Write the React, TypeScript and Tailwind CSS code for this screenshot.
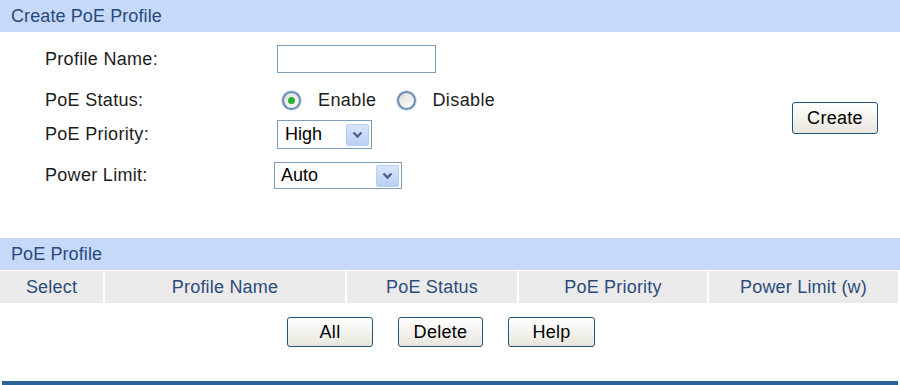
function Radio({ checked }: { checked?: boolean }) {
    return (
        <span className="
            flex items-center justify-center
            w-[19px] h-[19px]
            rounded-full border-2 border-[#6a8cb3]
            bg-gradient-to-br from-[#dcdcdc] to-white
            shadow-[0_0_0_1px_#d5e0ee]
        ">
            {checked && <span className="w-[7px] h-[7px] rounded-full bg-[#29b02f]" />}
        </span>
    );
}

function Select(props: { value: string, width: string, textPad: string }) {
    return (
        <div className={`flex items-center justify-between h-full border border-[#7f9db9] bg-white ${props.width}`}>
            <span className={`text-[18px] text-black ${props.textPad}`}>{props.value}</span>
            <span className="
                flex items-center justify-center
                w-[23px] h-[22px] mr-[2px]
                rounded-[2px] border border-[#b9cdf1]
                bg-gradient-to-b from-[#d9e5fb] to-[#b9cff5]
            ">
                <svg width="11" height="8" viewBox="0 0 11 8">
                    <path d="M1.5 1.5 L5.5 5.5 L9.5 1.5" stroke="#4d6288" strokeWidth="2.4" fill="none" />
                </svg>
            </span>
        </div>
    );
}

function Button(props: { label: string, width?: string }) {
    return (
        <button className={`
            h-[30px] ${props.width ?? 'w-[86px]'}
            rounded-[3px] border border-[#1f5583]
            bg-gradient-to-b from-white to-[#e8e6dc]
            text-[18px] text-black leading-none tracking-[0.3px]
        `}>
            {props.label}
        </button>
    );
}

const labelCls = "w-[232px] text-[18px] text-[#1c1c1c] tracking-[0.3px]";

const columns = [
    { name: 'Select', w: 'w-[103px]' },
    { name: 'Profile Name', w: 'w-[240px]' },
    { name: 'PoE Status', w: 'w-[170px]' },
    { name: 'PoE Priority', w: 'w-[188px]' },
    { name: 'Power Limit (w)', w: 'w-[189px]' },
];

export default function App() {
    return (
        <div className="w-[900px] h-[385px] bg-white flex flex-col font-['Liberation_Sans',Arial,sans-serif] overflow-hidden">
            <div className="h-[32px] flex items-center pl-[11px] bg-[#c6d9f9] text-[18px] text-[#284a7e] tracking-[0.1px]">
                Create PoE Profile
            </div>

            <div className="h-[206px] flex">
                <div className="flex flex-col pl-[45px]">
                    <div className="flex items-center mt-[13px] h-[28px]">
                        <span className={labelCls}>Profile Name:</span>
                        <div className="w-[159px] h-full border border-[#7f9db9] bg-white" />
                    </div>
                    <div className="flex items-center mt-[17px] h-[20px]">
                        <span className={labelCls}>PoE Status:</span>
                        <div className="flex items-center text-[18px] text-[#1c1c1c] tracking-[0.4px]">
                            <span className="ml-[5px]"><Radio checked /></span>
                            <span className="ml-[17px]">Enable</span>
                            <span className="ml-[21px]"><Radio /></span>
                            <span className="ml-[16px]">Disable</span>
                        </div>
                    </div>
                    <div className="flex items-center mt-[10px] h-[29px]">
                        <span className={labelCls}>PoE Priority:</span>
                        <Select value="High" width="w-[95px]" textPad="pl-[7px]" />
                    </div>
                    <div className="flex items-center mt-[13px] h-[27px]">
                        <span className={labelCls}>Power Limit:</span>
                        <div className="-ml-[3px] h-full">
                            <Select value="Auto" width="w-[128px]" textPad="pl-[6px]" />
                        </div>
                    </div>
                </div>
                <div className="flex-1 flex justify-end items-start pt-[70px] pr-[22px]">
                    <Button label="Create" width="w-[86px] h-[32px]" />
                </div>
            </div>

            <div className="h-[32px] flex items-center pl-[11px] bg-[#c6d9f9] text-[18px] text-[#284a7e] tracking-[0.1px]">
                PoE Profile
            </div>

            <div className="flex gap-[2px] mt-[1px] h-[32px]">
                {columns.map((c) => (
                    <div key={c.name} className={`${c.w} flex items-center justify-center bg-[#ebebeb] text-[18px] text-[#2c4b7b] tracking-[0.2px]`}>
                        {c.name}
                    </div>
                ))}
            </div>

            <div className="flex gap-[25px] pl-[287px] mt-[14px]">
                <Button label="All" />
                <Button label="Delete" width="w-[85px]" />
                <Button label="Help" width="w-[87px]" />
            </div>

            <div className="mt-[34px] mx-[2px] h-[4px] bg-[#2b6597]" />
        </div>
    );
}
